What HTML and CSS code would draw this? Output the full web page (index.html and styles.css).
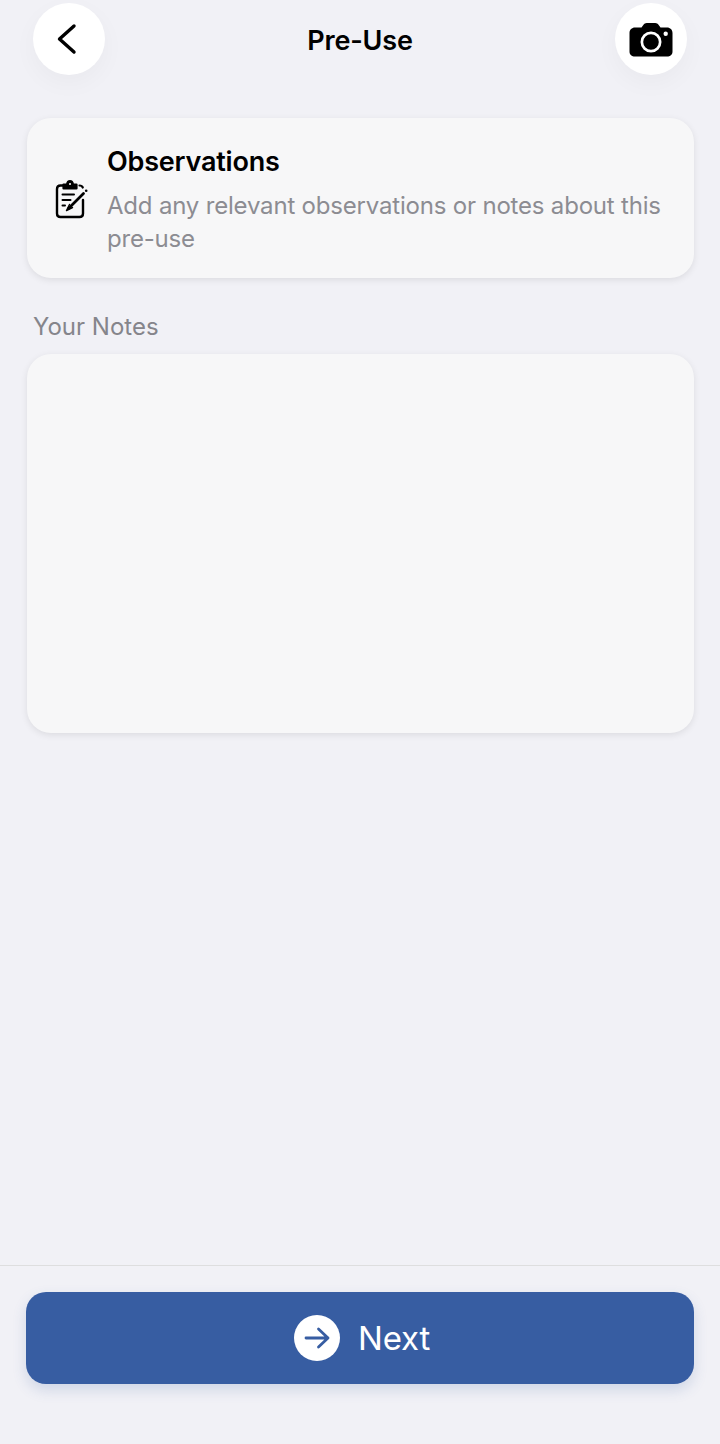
FILE: index.html
```html
<!DOCTYPE html>
<html lang="en">
<head>
<meta charset="utf-8">
<title>Pre-Use</title>
<link rel="stylesheet" href="styles.css">
</head>
<body>
<div class="screen">
  <header class="topbar">
    <button class="round-btn" aria-label="Back">
      <svg class="icon-back" width="22" height="32" viewBox="0 0 22 32"><path d="M18 3 L3.500 16 L18 29" fill="none" stroke="#000" stroke-width="3.400" stroke-linecap="round" stroke-linejoin="round"/></svg>
    </button>
    <h1 class="title">Pre-Use</h1>
    <button class="round-btn" aria-label="Camera">
      <svg class="icon-cam" width="44" height="34" viewBox="0 0 44 34"><path fill-rule="evenodd" d="M6 4.500H12.500L14.500 1.800C15.300 .700 16.300 0 17.700 0H26.300C27.700 0 28.700 .700 29.500 1.800L31.500 4.500H38C41.200 4.500 43.500 6.800 43.500 10V28.500C43.500 31.700 41.200 33.500 38 33.500H6C2.800 33.500 .500 31.700 .500 28.500V10C.500 6.800 2.800 4.500 6 4.500ZM22 8.500A10.500 10.500 0 1 0 22 29.500 10.500 10.500 0 1 0 22 8.500ZM22 11.200A7.800 7.800 0 1 1 22 26.800 7.800 7.800 0 1 1 22 11.200ZM36.700 8.500A2.200 2.200 0 1 0 36.700 12.900 2.200 2.200 0 1 0 36.700 8.500Z" fill="#000"/></svg>
    </button>
  </header>

  <section class="card info">
    <svg class="clip" width="34" height="40" viewBox="0 0 34 40" fill="none" stroke="#000" stroke-linecap="round" stroke-linejoin="round">
      <path d="M8 6.500H5.500C3.500 6.500 2 8 2 10V34.500C2 36.500 3.500 38 5.500 38H24.500C26.500 38 28 36.500 28 34.500V21" stroke-width="2.400"/>
      <path d="M8.500 9.500V5.500H12C12.300 3.500 13.500 2 15 2C16.500 2 17.700 3.500 18 5.500H21.500V9.500Z" stroke-width="2.200" fill="#000"/>
      <circle cx="15" cy="5" r="1" fill="#fff" stroke="none"/>
      <path d="M24.500 6.500C26 6.500 27.200 7 27.800 8.500" stroke-width="2.200"/>
      <path d="M7.500 15.500H19M7.500 21H15.500M7.500 26.500H10" stroke-width="2"/>
      <path d="M13.500 29.500L28.500 14.500" stroke-width="2.800"/>
      <path d="M11.500 31.500L14.500 25.500M11.500 31.500L17.500 28.500" stroke-width="1.400"/>
      <circle cx="31.200" cy="11.800" r="1.300" fill="#000" stroke="none"/>
    </svg>
    <div class="info-text">
      <h2 class="info-title">Observations</h2>
      <p class="info-desc">Add any relevant observations or notes about this pre-use</p>
    </div>
  </section>

  <label class="notes-label" for="notes">Your Notes</label>
  <textarea id="notes" class="card notes"></textarea>

  <div class="spacer"></div>

  <footer class="footer">
    <button class="next">
      <span class="next-icon">
        <svg width="26" height="22" viewBox="0 0 26 22" fill="none" stroke="#375da2" stroke-width="2.800" stroke-linecap="round" stroke-linejoin="round"><path d="M2 11H24M14.500 2L24 11L14.500 20"/></svg>
      </span>
      <span>Next</span>
    </button>
  </footer>
</div>
</body>
</html>
```

FILE: styles.css
```css
* { box-sizing: border-box; }
html, body { margin: 0; padding: 0; }
body {
  background: #f1f1f6;
  font-family: Inter, "Liberation Sans", sans-serif;
  color: #000;
}
.screen {
  width: 720px;
  height: 1444px;
  display: flex;
  flex-direction: column;
  overflow: hidden;
}
.topbar {
  display: flex;
  align-items: center;
  justify-content: space-between;
  padding: 3px 33px 0;
  height: 75px;
  flex: none;
}
.round-btn {
  width: 72px;
  height: 72px;
  border: 0;
  border-radius: 50%;
  background: #fff;
  box-shadow: 0 8px 24px rgba(0, 0, 0, 0.035);
  display: flex;
  align-items: center;
  justify-content: center;
  padding: 0;
}
.icon-back { margin-right: 5px; }
.icon-cam { margin-top: 1px; }
.title {
  margin: 2px 0 0;
  font-size: 27px;
  font-weight: 600;
  letter-spacing: -0.2px;
}
.card {
  background: #f7f7f8;
  border-radius: 24px;
  box-shadow: 0 2px 7px rgba(0, 0, 0, 0.09);
}
.info {
  margin: 43px 26px 0 27px;
  height: 160px;
  display: flex;
  align-items: center;
  flex: none;
  padding: 0 20px 0 28px;
  gap: 18px;
}
.clip { flex: none; margin-top: 2px; }
.info-text { padding-top: 3px; }
.info-title {
  margin: 0 0 10px;
  font-size: 27px;
  line-height: 34px;
  font-weight: 600;
  letter-spacing: -0.2px;
}
.info-desc {
  margin: 0;
  font-size: 24px;
  line-height: 33px;
  letter-spacing: -0.19px;
  color: #8c8c92;
}
.notes-label {
  margin: 34px 0 0 33px;
  font-size: 24px;
  line-height: 29px;
  font-weight: 400;
  color: #85858b;
}
.notes {
  display: block;
  margin: 13px 26px 0 27px;
  height: 379px;
  width: 667px;
  flex: none;
  border: 0;
  resize: none;
  outline: none;
}
.spacer { flex: 1; }
.footer {
  border-top: 1px solid #dededf;
  height: 179px;
  flex: none;
  padding: 26px 26px 0;
}
.next {
  width: 100%;
  height: 92px;
  border: 0;
  border-radius: 20px;
  background: #375da2;
  box-shadow: 0 6px 14px rgba(55, 93, 162, 0.18);
  color: #fff;
  font-family: inherit;
  font-size: 33px;
  font-weight: 400;
  letter-spacing: -0.2px;
  display: flex;
  align-items: center;
  justify-content: center;
  gap: 18px;
  padding: 0 0 0 4px;
}
.next-icon {
  width: 46px;
  height: 46px;
  border-radius: 50%;
  background: #fff;
  display: flex;
  align-items: center;
  justify-content: center;
}
```
